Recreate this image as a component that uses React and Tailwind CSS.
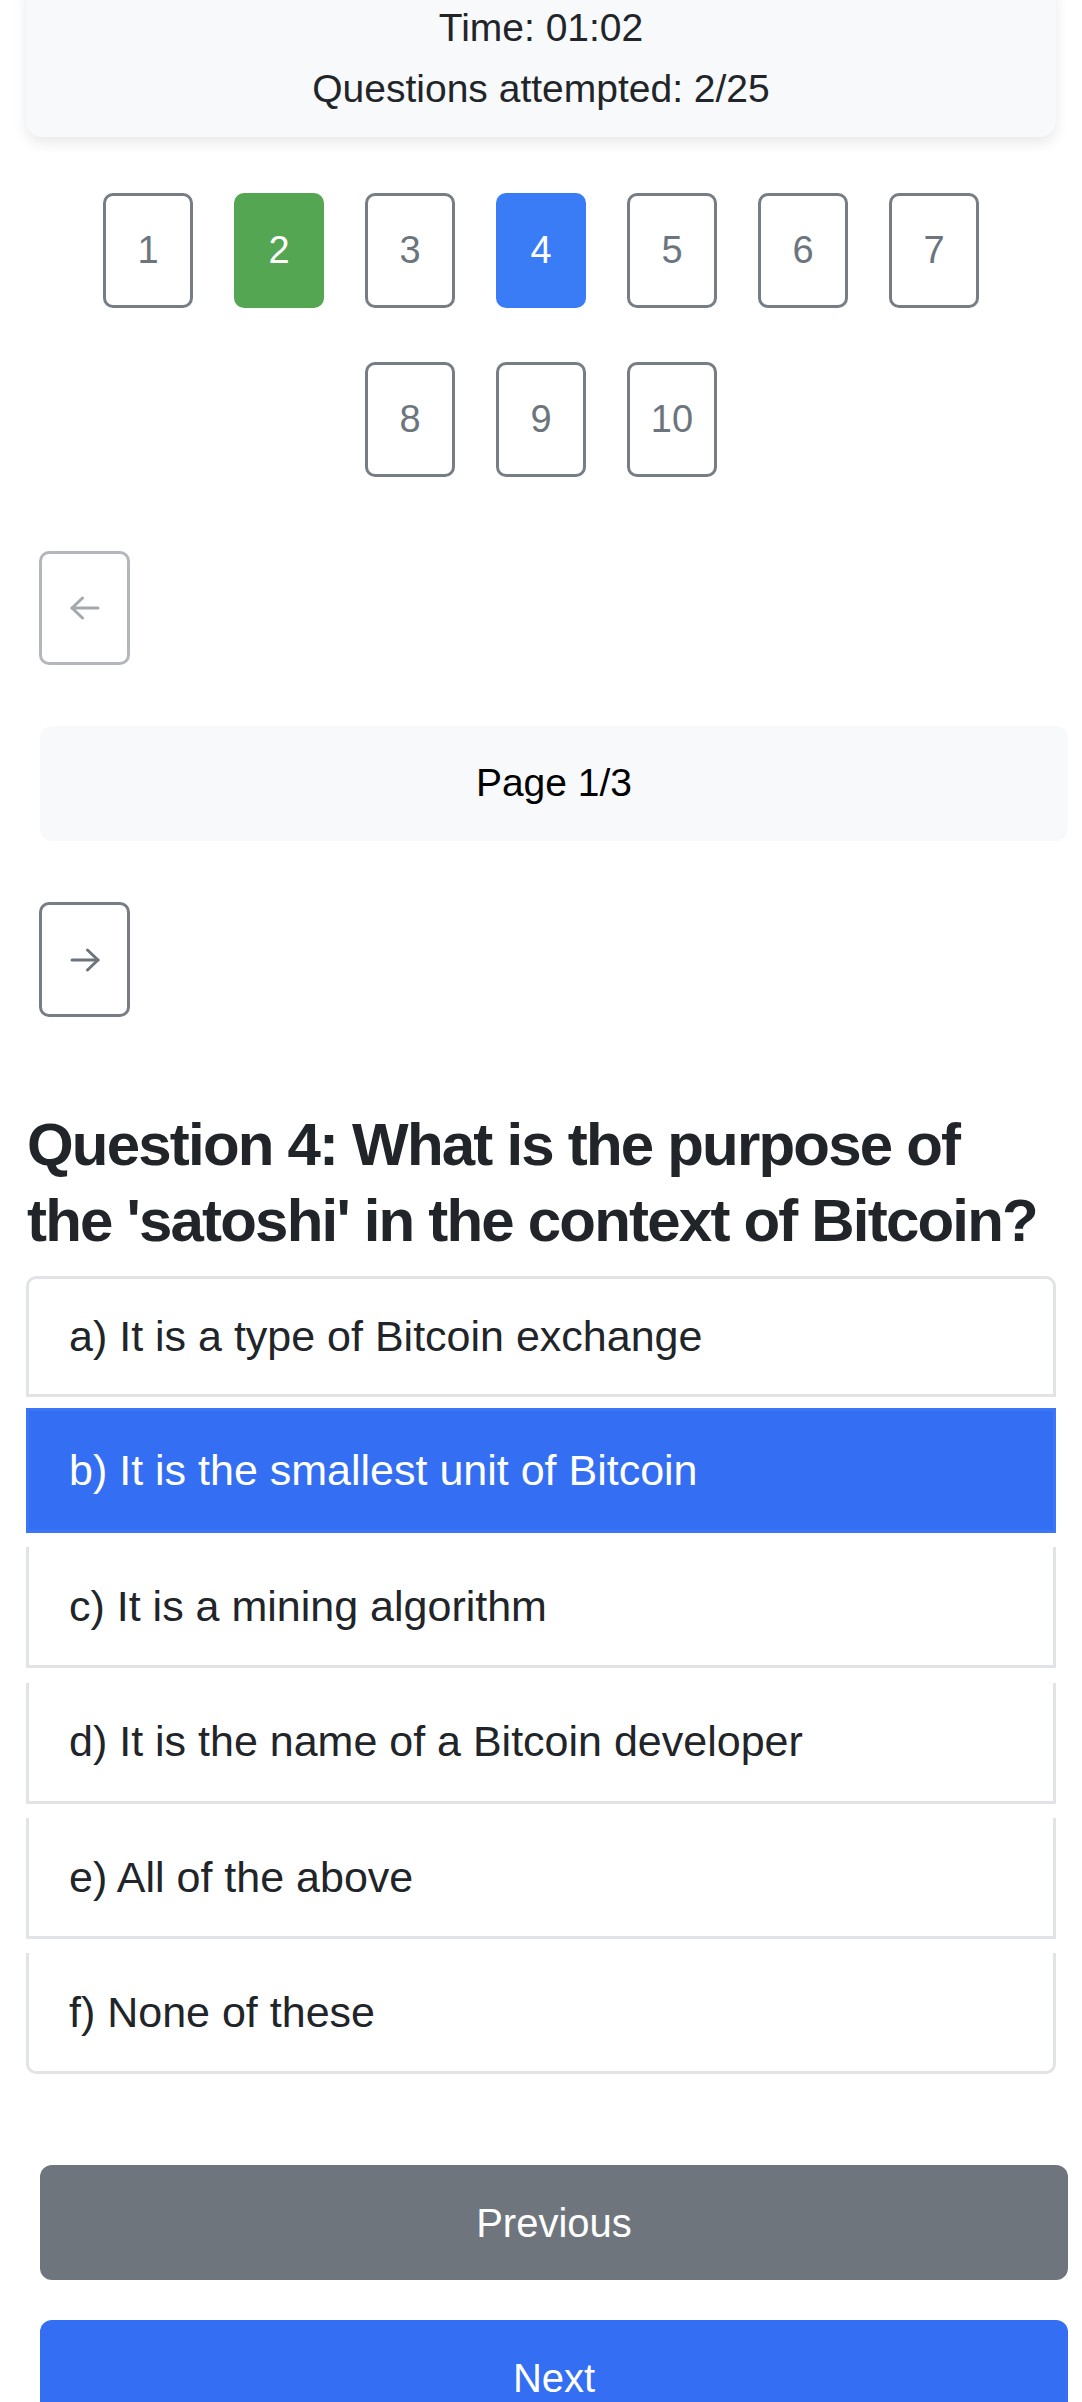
import React from "react";

function ArrowIcon({ dir, color }) {
  return (
    <svg width="30" height="24" viewBox="0 0 30 24" fill="none" stroke={color} strokeWidth="3" strokeLinecap="round" strokeLinejoin="round">
      {dir === "left" ? (
        <>
          <path d="M2 12H28" />
          <path d="M12.5 2L2 12L12.5 22" />
        </>
      ) : (
        <>
          <path d="M28 12H2" />
          <path d="M17.5 2L28 12L17.5 22" />
        </>
      )}
    </svg>
  );
}

const answers = [
  "a) It is a type of Bitcoin exchange",
  "b) It is the smallest unit of Bitcoin",
  "c) It is a mining algorithm",
  "d) It is the name of a Bitcoin developer",
  "e) All of the above",
  "f) None of these",
];

export default function App() {
  const nums = [1, 2, 3, 4, 5, 6, 7, 8, 9, 10];
  return (
    <div className="w-[1082px] min-h-[2402px] bg-white text-[#212529] font-['Liberation_Sans',Arial,sans-serif] overflow-hidden">
      {/* status card */}
      <div className="ml-[26px] w-[1030px] -mt-[20px] pt-[19px] pb-[19.5px] rounded-[16px] bg-[#f8f9fa] shadow-[0_6px_14px_rgba(0,0,0,0.09)] text-center text-[39px]">
        <div className="leading-[58px]">Time: 01:02</div>
        <div className="leading-[58px] mt-[2.5px]">Questions attempted: 2/25</div>
      </div>

      {/* question number buttons */}
      <div className="mt-[56px] mx-auto w-[960px] flex flex-wrap justify-center gap-x-[41px] gap-y-[54px]">
        {nums.map((n) => {
          let cls =
            "w-[90px] h-[115px] rounded-[10px] flex items-center justify-center text-[38px] ";
          if (n === 2) cls += "bg-[#55a653] text-white";
          else if (n === 4) cls += "bg-[#3a7cf6] text-white";
          else cls += "border-[3px] border-[#767d85] text-[#6c757d] bg-white";
          return (
            <div key={n} className={cls}>
              {n}
            </div>
          );
        })}
      </div>

      {/* prev page arrow (disabled) */}
      <div className="mt-[74px] ml-[39px] w-[91px] h-[114px] rounded-[10px] border-[3px] border-[#b3b7bc] flex items-center justify-center">
        <ArrowIcon dir="left" color="#a3a8ad" />
      </div>

      {/* page indicator */}
      <div className="mt-[61px] ml-[40px] w-[1028px] h-[115px] rounded-[12px] bg-[#f8f9fa] flex items-center justify-center text-[39px] text-black">
        Page 1/3
      </div>

      {/* next page arrow */}
      <div className="mt-[61px] ml-[39px] w-[91px] h-[115px] rounded-[10px] border-[3px] border-[#767d85] flex items-center justify-center">
        <ArrowIcon dir="right" color="#6c757d" />
      </div>

      {/* question */}
      <h2 className="mt-[90px] ml-[27px] w-[1020px] text-[60px] leading-[76px] font-bold tracking-[-1.8px] text-[#212529]">
        Question 4: What is the purpose of the 'satoshi' in the context of Bitcoin?
      </h2>

      {/* answers */}
      <div className="mt-[17px] ml-[26px] w-[1030px] flex flex-col text-[43px]">
        <div className="h-[121px] border-[3px] border-[#e1e3e6] rounded-t-[10px] flex items-center pl-[40px] bg-white">
          {answers[0]}
        </div>
        <div className="mt-[11px] h-[125px] bg-[#346ff3] border-[3px] border-[#3a76f5] text-white flex items-center pl-[40px]">
          {answers[1]}
        </div>
        {answers.slice(2).map((a, i) => (
          <div
            key={a}
            className={
              "mt-[14.3px] h-[121px] border-x-[3px] border-b-[3px] border-[#e1e3e6] flex items-center pl-[40px] bg-white " +
              (i === 3 ? "rounded-b-[10px]" : "")
            }
          >
            {a}
          </div>
        ))}
      </div>

      {/* nav buttons */}
      <div className="mt-[91px] ml-[40px] w-[1028px] h-[115px] rounded-[12px] bg-[#6f757d] text-white text-[40px] flex items-center justify-center">
        Previous
      </div>
      <div className="mt-[40px] ml-[40px] w-[1028px] h-[115px] rounded-[12px] bg-[#346ef2] text-white text-[40px] flex items-center justify-center">
        Next
      </div>
    </div>
  );
}
